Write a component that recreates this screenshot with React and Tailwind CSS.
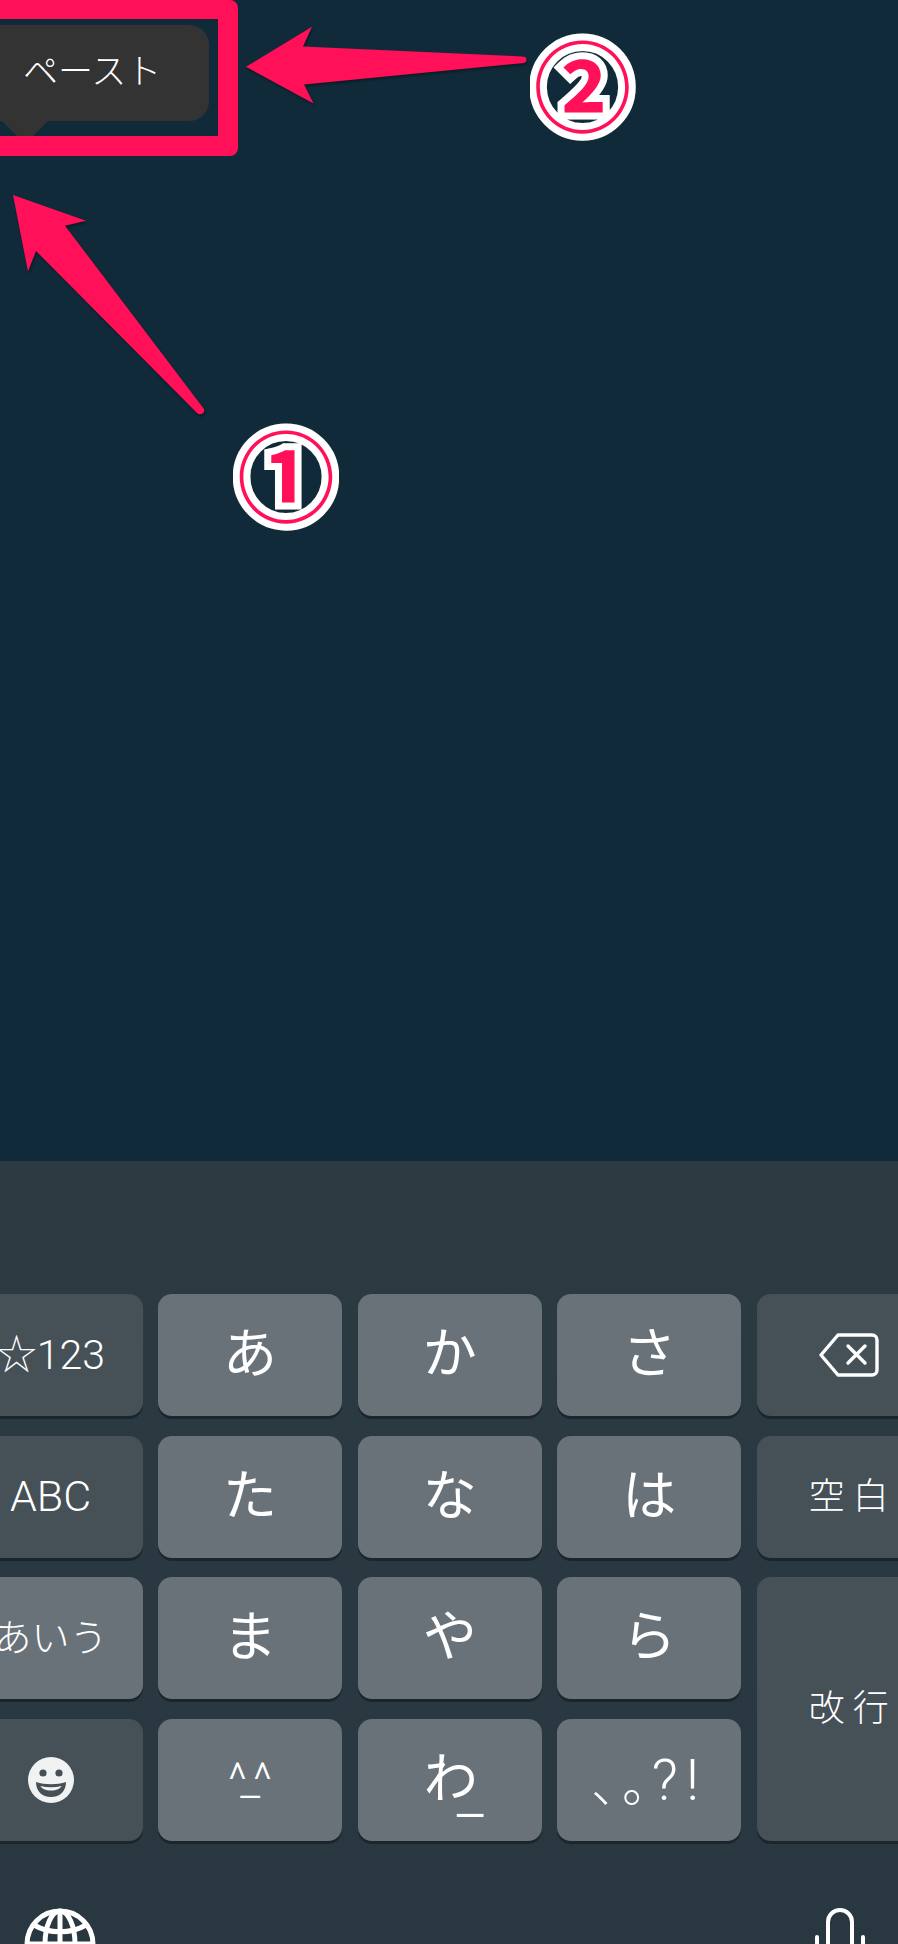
const CJK = "font-['Roboto','Noto_Sans_CJK_JP',sans-serif]"

function Key({ dark, className = "", children }) {
  return (
    <div
      className={`flex items-center justify-center rounded-[14px] text-white shadow-[0_3px_0_#1b262c] ${dark ? "bg-[#455057]" : "bg-[#6a7279]"} ${className}`}
    >
      {children}
    </div>
  )
}

const Kana = ({ children }) => <span className="text-[54px] leading-none">{children}</span>
const Label = ({ children }) => <span className="text-[36px] leading-none font-light tracking-[8px] pl-[8px]">{children}</span>

function BackspaceIcon() {
  return (
    <svg width="60" height="44" viewBox="0 0 60 44" fill="none" stroke="#fff" strokeWidth="3.4" strokeLinejoin="round" strokeLinecap="round">
      <path d="M19 2h34a5 5 0 0 1 5 5v30a5 5 0 0 1-5 5H19L2 22z" />
      <path d="M29 13l17 17M46 13L29 30" />
    </svg>
  )
}

function SmileIcon() {
  return (
    <svg width="46" height="46" viewBox="0 0 46 46">
      <circle cx="23" cy="23" r="23" fill="#f1f3f3" />
      <circle cx="15" cy="16" r="3.6" fill="#455057" />
      <circle cx="31" cy="16" r="3.6" fill="#455057" />
      <path d="M8 25c9 3 21 3 30 0 0 9-6 15-15 15S8 34 8 25z" fill="#455057" />
      <path d="M12.5 29c7 1.8 14 1.8 21 0-1 2.500-5 4.500-10.500 4.500S13.500 31.500 12.500 29z" fill="#f1f3f3" />
    </svg>
  )
}

function GlobeIcon() {
  return (
    <svg width="72" height="72" viewBox="0 0 72 72" fill="none" stroke="#fff" strokeWidth="5">
      <circle cx="36" cy="36" r="33" />
      <ellipse cx="36" cy="36" rx="15" ry="33" />
      <path d="M36 3v66M3 36h66M10 17c15 9 37 9 52 0" />
    </svg>
  )
}

function MicIcon() {
  return (
    <svg width="50" height="40" viewBox="0 0 50 40" fill="none" stroke="#fff" strokeWidth="4" strokeLinecap="round">
      <rect x="13" y="2" width="24" height="60" rx="12" />
      <path d="M2 29v20M48 29v20" />
    </svg>
  )
}

function Badge({ className, children }) {
  return (
    <div className={`absolute w-[106px] h-[130px] pb-[13px] flex items-center justify-center overflow-hidden ${className}`}>
      <span className="font-['Noto_Sans_CJK_JP',sans-serif] font-bold text-[98px] leading-none text-[#ff1059] [-webkit-text-stroke:14px_#fff] [paint-order:stroke_fill]">
        {children}
      </span>
    </div>
  )
}

function Annotations() {
  return (
    <div className="absolute inset-0 pointer-events-none">
      <div className="absolute left-[-30px] top-0 w-[268px] h-[156px] rounded-[8px] border-solid border-[#ff1059] border-t-[19px] border-r-[20px] border-b-[20px] border-l-[20px]" />
      <svg className="absolute left-0 top-0 drop-shadow-[1px_2px_1px_rgba(0,0,0,0.35)]" width="898" height="500" viewBox="0 0 898 500" fill="#ff1059">
        <path d="M246 66.800L312 26.800L303 46.400L522 56.400Q526.500 56.400 526.500 59.800Q526.500 63.200 522 63.200L304 84.600L313.500 103.600z" />
        <path d="M13 195L86 220.700L65 225.700L204 409Q205 413 201.500 414Q199 415 197 413L36 251L28 271.400z" />
      </svg>
      <Badge className="left-[233px] top-[412px]">①</Badge>
      <Badge className="left-[529.500px] top-[22.500px]">②</Badge>
    </div>
  )
}

export default function App() {
  return (
    <div className={`relative w-[898px] h-[1944px] overflow-hidden flex flex-col bg-[#102a39] ${CJK}`}>
      {/* zone de contenu avec le menu coller */}
      <div className="h-[1161px] shrink-0 pt-[25px]">
        <div className="relative w-[209px] h-[96px] rounded-r-[20px] bg-[#333333] text-white text-[35px] font-light flex items-center pl-[23px]">
          ペースト
          <svg className="absolute left-0 top-[96px]" width="50" height="16" viewBox="0 0 50 16" fill="#333333">
            <path d="M2 0h46L32 16H18z" />
          </svg>
        </div>
      </div>

      {/* clavier */}
      <div className="flex-1 bg-linear-to-b from-[#2c3b42] to-[#283740] pt-[133px]">
        <div className="ml-[-41.500px] w-[984px] grid grid-cols-[repeat(5,184px)] auto-rows-[122px] gap-x-[15.6px] gap-y-[19.500px]">
          <Key dark><span className="text-[41px] leading-none font-light">☆123</span></Key>
          <Key><Kana>あ</Kana></Key>
          <Key><Kana>か</Kana></Key>
          <Key><Kana>さ</Kana></Key>
          <Key dark className="justify-start pl-[62px]"><BackspaceIcon /></Key>

          <Key dark><span className="text-[43px] leading-none font-light">ABC</span></Key>
          <Key><Kana>た</Kana></Key>
          <Key><Kana>な</Kana></Key>
          <Key><Kana>は</Kana></Key>
          <Key dark><Label>空白</Label></Key>

          <Key><span className="text-[38px] leading-none font-light">あいう</span></Key>
          <Key><Kana>ま</Kana></Key>
          <Key><Kana>や</Kana></Key>
          <Key><Kana>ら</Kana></Key>
          <Key dark className="row-span-2"><Label>改行</Label></Key>

          <Key dark><SmileIcon /></Key>
          <Key><span className="text-[46px] leading-none font-light tracking-[-7px] pr-[7px]">^_^</span></Key>
          <Key className="pl-[8px]">
            <span className="text-[54px] leading-none">わ</span>
            <span className="text-[62px] leading-none -ml-[21px] translate-y-[13px] font-light">_</span>
          </Key>
          <Key>
            <span className="text-[50px] leading-none tracking-[5px] [font-feature-settings:'palt'] font-light font-['Noto_Sans_CJK_JP',sans-serif]">、。</span>
            <span className="text-[58px] leading-none tracking-[8px] font-light">?!</span>
          </Key>
        </div>

        <div className="mt-[67px] pl-[24px] pr-[33px] flex justify-between items-start">
          <GlobeIcon />
          <MicIcon />
        </div>
      </div>

      <Annotations />
    </div>
  )
}
